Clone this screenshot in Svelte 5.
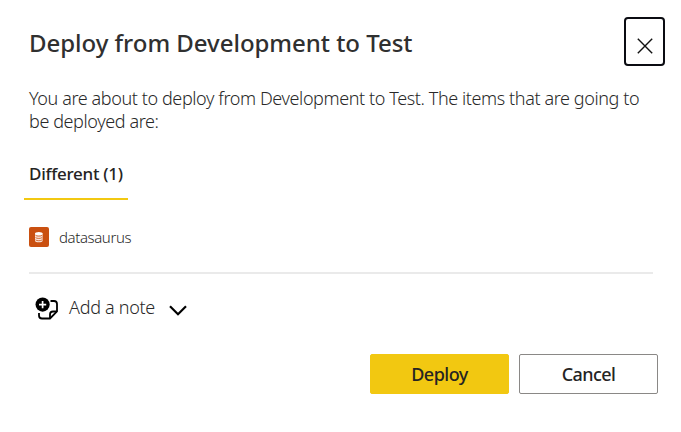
<script>
  const items = ['datasaurus'];
</script>

<div class="dialog" role="dialog" aria-labelledby="title">
  <header>
    <h1 id="title">Deploy from Development to Test</h1>
    <button class="close" aria-label="Close">
      <svg width="16" height="16" viewBox="0 0 16 16"><path d="M.8.8l14.4 14.4M15.2.8L.8 15.2" stroke="#111" stroke-width="1.4" fill="none" /></svg>
    </button>
  </header>
  <p><span class="l1">You are about to deploy from Development to Test. The items that are going to</span><br /><span class="l2">be deployed are:</span></p>
  <div class="tab"><span>Different ({items.length})</span></div>
  <ul>
    {#each items as item}
      <li>
        <svg width="20" height="20" viewBox="0 0 20 20">
          <rect width="20" height="20" rx="2" fill="#ca5010" />
          <path d="M6 6.5v7.2c0 2 7.6 2 7.6 0V6.5z" fill="#f8e4da" />
          <ellipse cx="9.8" cy="6.5" rx="3.8" ry="1.6" fill="#fff" />
          <path d="M6.5 8.3c1.3 1.1 5.3 1.1 6.6 0M6.5 10.6c1.3 1.1 5.3 1.1 6.6 0M6.5 12.9c1.3 1.1 5.3 1.1 6.6 0" fill="none" stroke="#ca5010" stroke-width=".8" />
        </svg>
        <span>{item}</span>
      </li>
    {/each}
  </ul>
  <div class="note">
    <svg class="add" width="24" height="24" viewBox="0 0 24 24" fill="none" stroke="#000" stroke-width="1.8">
      <path d="M15.5 4H19a3 3 0 0 1 3 3v7.5l-7 7H7a3 3 0 0 1-3-3V16" />
      <path d="M22 14.5h-4a3 3 0 0 0-3 3v4" stroke-width="1.8" />
      <circle cx="7.6" cy="7.6" r="7.1" fill="#000" stroke="none" />
      <path d="M7.6 4v7.2M4 7.6h7.2" stroke="#fff" stroke-width="1.7" />
    </svg>
    <span>Add a note</span>
    <svg class="chev" width="18" height="11" viewBox="0 0 18 11"><path d="M1 1.2l8 8 8-8" fill="none" stroke="#000" stroke-width="2.2" /></svg>
  </div>
  <footer>
    <button class="primary"><span>Deploy</span></button>
    <button><span>Cancel</span></button>
  </footer>
</div>

<style>
  :global(body) { background: #fff; }
  .dialog { box-sizing: border-box; width: 681px; height: 432px; padding: 17px 16px 0 24px; font-family: "Noto Sans", "Open Sans", sans-serif; color: #292929; }
  header { display: flex; justify-content: space-between; height: 49px; padding-left: 5px; }
  h1 { margin: 0; font-size: 24px; font-weight: 500; line-height: 52px; white-space: nowrap; letter-spacing: -.03px; color: #303030; }
  button { box-sizing: border-box; padding: 0; margin: 0; font-family: inherit; background: #fff; }
  .close { width: 41px; height: 49px; border: 2px solid #0b0c12; border-radius: 4px; display: flex; align-items: center; justify-content: center; padding-top: 8px; }
  p { margin: 21px 0 0 5px; font-size: 18px; font-weight: 300; line-height: 23px; white-space: nowrap; letter-spacing: -.4px; }
  .tab { box-sizing: border-box; width: 104px; height: 41px; margin-top: 26px; padding-left: 5px; border-bottom: 2px solid #f2c811; font-size: 17px; font-weight: 500; line-height: 30px; white-space: nowrap; color: #252423; letter-spacing: -.28px; }
  ul { box-sizing: border-box; list-style: none; margin: 0 12px 0 5px; padding: 27px 0 0; height: 74px; border-bottom: 2px solid #eaeaea; }
  li { display: flex; height: 20px; gap: 10px; font-size: 15px; line-height: 21px; }
  li span { font-weight: 300; letter-spacing: -.4px; }
  .note { display: flex; align-items: center; height: 40px; margin-top: 13px; padding-left: 11px; font-size: 18px; font-weight: 300; white-space: nowrap; }
  .note > span { width: 86px; margin-left: 10px; letter-spacing: -.3px; }
  .add { margin-top: 3px; }
  .chev { margin: 6px 0 0 14px; }
  footer { display: flex; justify-content: flex-end; gap: 10px; margin: 27px 7px 0 0; }
  footer button { width: 139px; height: 40px; border: 1px solid #8a8886; border-radius: 2px; font-size: 18px; font-weight: 500; letter-spacing: -.6px; color: #252423; }
  footer .primary { background: #f2c811; border-color: #f2c811; letter-spacing: -.5px; }
</style>
